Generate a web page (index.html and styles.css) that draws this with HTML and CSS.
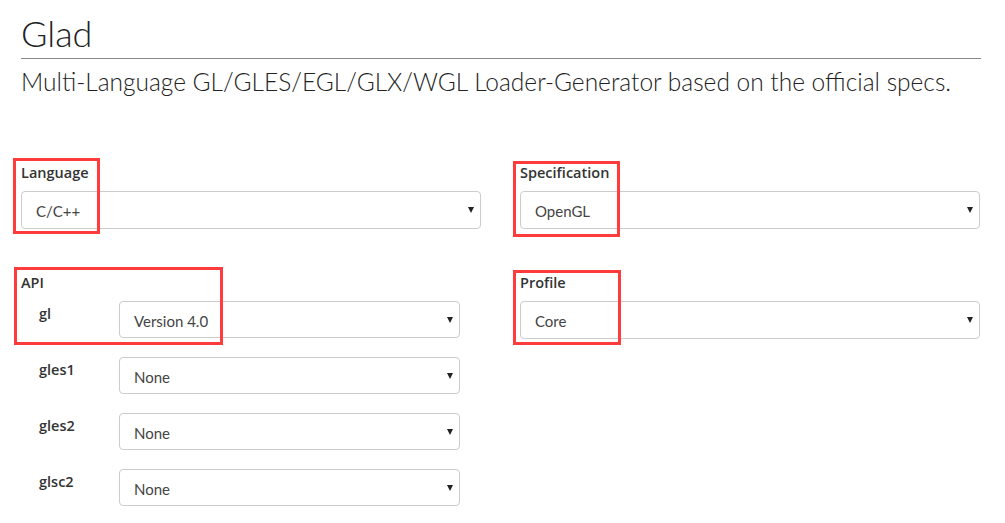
FILE: index.html
```html
<!DOCTYPE html>
<html>
<head>
<meta charset="utf-8">
<link rel="stylesheet" href="styles.css">
</head>
<body>
<div class="page">
  <header class="head">
    <h1 class="title">Glad</h1>
    <p class="lead">Multi-Language GL/GLES/EGL/GLX/WGL Loader-Generator based on the official specs.</p>
  </header>
  <form class="form">
    <div class="col">
      <div class="field">
        <label class="label">Language</label>
        <div class="select"><span class="value">C/C++</span><span class="caret"></span></div>
      </div>
      <div class="field api">
        <label class="label">API</label>
        <div class="api-row"><span class="api-name">gl</span><div class="select"><span class="value">Version 4.0</span><span class="caret"></span></div></div>
        <div class="api-row"><span class="api-name">gles1</span><div class="select"><span class="value">None</span><span class="caret"></span></div></div>
        <div class="api-row"><span class="api-name">gles2</span><div class="select"><span class="value">None</span><span class="caret"></span></div></div>
        <div class="api-row"><span class="api-name">glsc2</span><div class="select"><span class="value">None</span><span class="caret"></span></div></div>
      </div>
    </div>
    <div class="col">
      <div class="field">
        <label class="label">Specification</label>
        <div class="select"><span class="value">OpenGL</span><span class="caret"></span></div>
      </div>
      <div class="field api">
        <label class="label">Profile</label>
        <div class="select"><span class="value">Core</span><span class="caret"></span></div>
      </div>
    </div>
  </form>
  <div class="mark mark-lang"></div>
  <div class="mark mark-api"></div>
  <div class="mark mark-spec"></div>
  <div class="mark mark-profile"></div>
</div>
</body>
</html>
```
FILE: styles.css
```css
html, body {
  margin: 0;
  padding: 0;
  background: #fff;
}
body {
  font-family: "Lato", "Open Sans", sans-serif;
  color: #333;
}
.page {
  position: relative;
  width: 1005px;
  height: 523px;
  overflow: hidden;
  padding: 0 24px 0 21px;
  box-sizing: border-box;
}
.head {
  width: 960px;
}
.title {
  margin: 0;
  padding-top: 12px;
  font-size: 36px;
  line-height: 42px;
  font-weight: 300;
  color: #222;
  border-bottom: 1px solid #888;
  height: 46px;
  box-sizing: content-box;
}
.lead {
  margin: 0;
  padding-top: 8px;
  font-size: 24.5px;
  line-height: 30px;
  font-weight: 300;
  color: #222;
}
.form {
  display: grid;
  grid-template-columns: 460px 460px;
  column-gap: 39px;
  margin-top: 66px;
}
.col {
  display: flex;
  flex-direction: column;
}
.field {
  display: flex;
  flex-direction: column;
}
.field.api {
  margin-top: 44px;
}
.label {
  font-family: "Open Sans", "Lato", sans-serif;
  font-size: 14.5px;
  font-weight: 600;
  line-height: 20px;
  margin-bottom: 8px;
  color: #333;
}
.select {
  height: 38px;
  box-sizing: border-box;
  border: 1px solid #ccc;
  border-radius: 4px;
  display: flex;
  align-items: center;
  justify-content: space-between;
  padding: 0 6px 0 14px;
  background: #fff;
}
.value {
  font-size: 15px;
  color: #444;
  padding-top: 2px;
}
.caret {
  width: 0;
  height: 0;
  border-left: 3px solid transparent;
  border-right: 3px solid transparent;
  border-top: 6px solid #222;
}
.api-row {
  display: flex;
  align-items: flex-start;
  margin-bottom: 19px;
}
.api-row .select {
  width: 341px;
  height: 37px;
}
.api-name {
  width: 80px;
  padding-left: 18px;
  padding-top: 3px;
  font-family: "Open Sans", "Lato", sans-serif;
  font-size: 14.5px;
  font-weight: 600;
  color: #333;
}
.mark {
  position: absolute;
  border: 3px solid #ff3b3b;
  box-sizing: border-box;
}
.mark-lang { left: 13px; top: 158px; width: 87px; height: 76px; }
.mark-api { left: 14px; top: 267px; width: 209px; height: 78px; }
.mark-spec { left: 513px; top: 161px; width: 107px; height: 76px; }
.mark-profile { left: 513px; top: 270px; width: 108px; height: 75px; }
```
